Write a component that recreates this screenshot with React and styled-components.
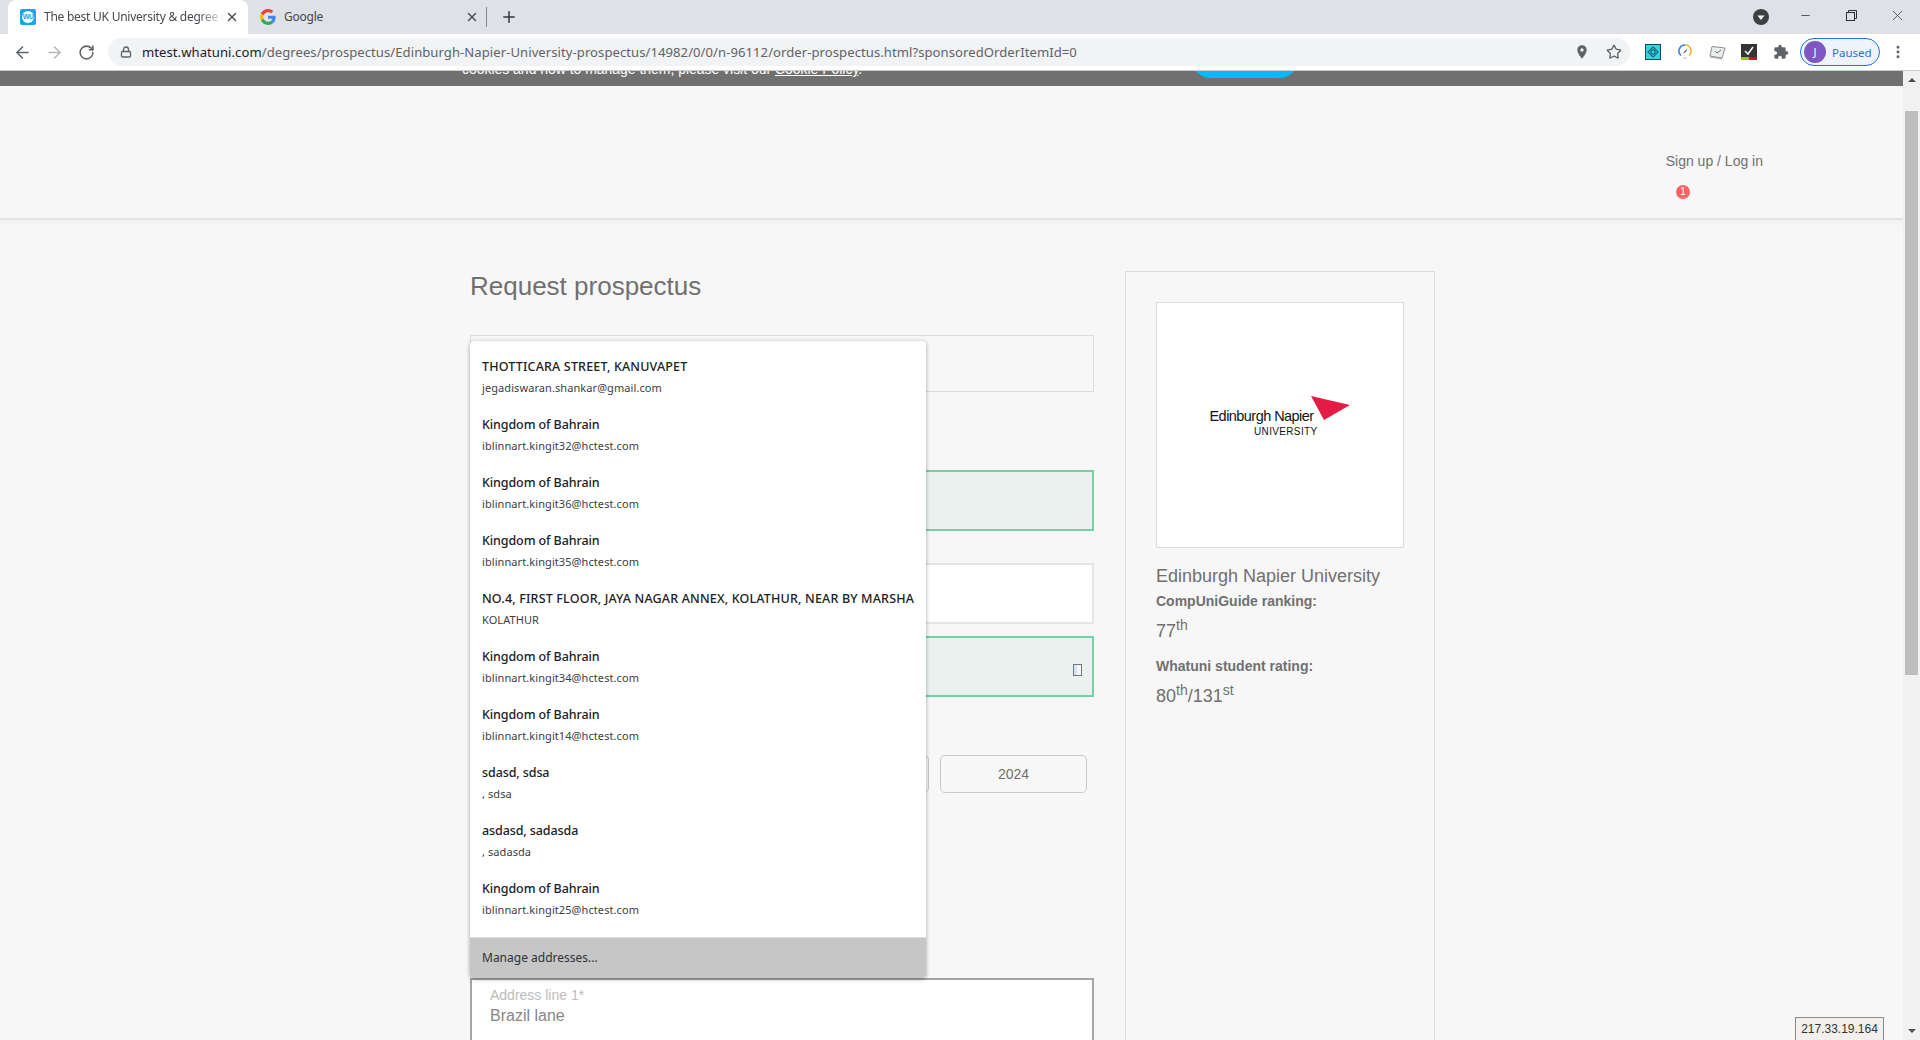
import React from "react";
import styled, { createGlobalStyle } from "styled-components";
import { ArrowLeft, ArrowRight, RotateCw, Lock, Star, Plus, X, Minus, MoreVertical } from "lucide-react";

const Global = createGlobalStyle`
  html, body {
    margin: 0;
    padding: 0;
    height: 1040px;
    overflow: hidden;
    background: #f7f7f7;
  }
  * { box-sizing: border-box; }
`;

const Shell = styled.div`
  position: relative;
  width: 1920px;
  height: 1040px;
  display: flex;
  flex-direction: column;
  overflow: hidden;
  font-family: "Liberation Sans", Arial, sans-serif;
`;

/* browser chrome */
const TabStrip = styled.div`
  height: 34px;
  flex: none;
  display: flex;
  align-items: stretch;
  padding-left: 8px;
  background: #dee1e6;
`;

const Tab = styled.div`
  width: 240px;
  display: flex;
  align-items: center;
  padding-left: 12px;
  padding-right: 9px;
  border-radius: 8px 8px 0 0;
  background: ${p => (p.$active ? "#ffffff" : "transparent")};
`;

const TabTitle = styled.span`
  flex: 1;
  margin-left: 8px;
  overflow: hidden;
  white-space: nowrap;
  font-family: "Noto Sans", sans-serif;
  font-size: 12px;
  line-height: 16px;
  margin-top: -1px;
  letter-spacing: -0.25px;
  color: #45484c;
  ${p => p.$fade && `
    -webkit-mask-image: linear-gradient(90deg, #000 85%, transparent 100%);
    mask-image: linear-gradient(90deg, #000 85%, transparent 100%);
  `}
`;

const TabClose = styled(X)`
  flex: none;
  color: #4a4c50;
`;

const TabDivider = styled.div`
  width: 1px;
  height: 20px;
  margin-left: -2px;
  align-self: center;
  background: #85888c;
`;

const NewTab = styled(Plus)`
  align-self: center;
  margin-left: 13px;
  color: #35373a;
`;

const WuIcon = styled.div`
  width: 16px;
  height: 16px;
  flex: none;
  border-radius: 2px;
  background: #12a8ea;
  display: flex;
  align-items: center;
  justify-content: center;
`;

const WuMark = styled.span`
  width: 12px;
  height: 12px;
  border-radius: 50%;
  background: #fff;
  color: #12a8ea;
  font-size: 7px;
  font-weight: bold;
  line-height: 12px;
  text-align: center;
  letter-spacing: -0.5px;
`;

const WindowControls = styled.div`
  margin-left: auto;
  display: flex;
  align-items: flex-start;
  color: #2c2d30;
`;

const TabSearch = styled.svg`
  width: 16px;
  height: 16px;
  margin-top: 9px;
  margin-right: 13px;
`;

const WinButton = styled.div`
  width: 46px;
  height: 30px;
  display: flex;
  align-items: center;
  justify-content: center;
`;

const Toolbar = styled.div`
  height: 36px;
  flex: none;
  display: flex;
  align-items: center;
  padding-left: 12px;
  background: #ffffff;
  color: #5f6368;
`;

const NavButton = styled.div`
  width: 20px;
  height: 20px;
  margin-right: 12px;
  display: flex;
  align-items: center;
  justify-content: center;
  color: ${p => (p.$disabled ? "#b5b7ba" : "#5f6368")};
`;

const AddressBar = styled.div`
  width: 1522px;
  height: 28px;
  display: flex;
  align-items: center;
  padding: 0 8px 0 12px;
  border-radius: 14px;
  background: #f1f3f4;
`;

const UrlText = styled.span`
  flex: 1;
  margin-left: 10px;
  font-family: "Noto Sans", sans-serif;
  font-size: 13.08px;
  letter-spacing: 0.06px;
  color: #5f6368;
  white-space: nowrap;
`;

const Host = styled.span`
  color: #202124;
`;

const BarIcons = styled.div`
  display: flex;
  align-items: center;
  gap: 16px;
`;

const Extensions = styled.div`
  display: flex;
  align-items: center;
  margin-left: 7px;
`;

const ExtSlot = styled.div`
  width: 32px;
  height: 28px;
  display: flex;
  align-items: center;
  justify-content: center;
`;

const ProfilePill = styled.div`
  width: 80px;
  height: 28px;
  margin-left: 3px;
  display: flex;
  align-items: center;
  padding-left: 3px;
  border: 1px solid #1a73e8;
  border-radius: 14px;
  background: #eef3fc;
  font-family: "Noto Sans", sans-serif;
  font-size: 11.5px;
  color: #2f6fdc;
`;

const Avatar = styled.span`
  width: 22px;
  height: 22px;
  margin-right: 6px;
  border-radius: 50%;
  background: #7e57c2;
  color: #fff;
  font-size: 11px;
  line-height: 22px;
  text-align: center;
`;

const MenuDots = styled(MoreVertical)`
  margin-left: 10px;
  color: #5f6368;
`;

/* page */
const Viewport = styled.div`
  flex: 1;
  display: flex;
  min-height: 0;
  border-top: 1px solid #c9cbce;
`;

const Page = styled.div`
  flex: 1;
  position: relative;
  overflow: hidden;
  background: #f7f7f7;
`;

const CookieBand = styled.div`
  height: 15px;
  overflow: hidden;
  display: flex;
  align-items: flex-end;
  padding-left: 462px;
  background: #707070;
  color: #fff;
  font-size: 14px;
  line-height: 16px;
`;

const CookieText = styled.span`
  display: block;
  margin-bottom: 9px;
  white-space: nowrap;
  letter-spacing: -0.03px;
  a { color: #fff; text-decoration: underline; }
`;

const CookieButton = styled.span`
  width: 108px;
  height: 40px;
  flex: none;
  margin-left: 329px;
  margin-bottom: 8px;
  border-radius: 20px;
  background: #00bbfd;
`;

const SiteHeader = styled.header`
  height: 134px;
  display: flex;
  flex-direction: column;
  align-items: flex-end;
  padding: 67px 140px 0 0;
  border-bottom: 2px solid #e2e2e2;
`;

const SignLink = styled.a`
  font-size: 14px;
  line-height: 16px;
  color: #707070;
`;

const Badge = styled.span`
  width: 14px;
  height: 14px;
  margin-top: 16px;
  margin-right: 73px;
  border-radius: 50%;
  background: #fb6464;
  color: #fff;
  font-size: 10px;
  line-height: 14px;
  text-align: center;
`;

const Main = styled.main`
  display: grid;
  grid-template-columns: 624px 310px;
  column-gap: 31px;
  padding: 38px 0 0 470px;
  background: linear-gradient(#f4f4f4, #f7f7f7 12px);
`;

const FormColumn = styled.div`
  position: relative;
  padding-top: 11px;
`;

const Title = styled.h1`
  margin: 0 0 32px;
  font-size: 26px;
  font-weight: normal;
  line-height: 34px;
  color: #707070;
`;

const Field = styled.div`
  height: ${p => p.$h || 61}px;
  margin-top: ${p => p.$gap || 0}px;
  position: relative;
  border: ${p => (p.$variant === "plain" ? "1px" : "2px")} solid
    ${p => ({ plain: "#dcdcdc", valid: "#73d1a4", white: "#e5e5e5", active: "#a5a5a5" }[p.$variant])};
  background: ${p => ({ plain: "transparent", valid: "#e9f2ef", white: "#ffffff", active: "#ffffff" }[p.$variant])};
`;

const Tofu = styled.span`
  position: absolute;
  right: 10px;
  bottom: 19px;
  width: 9px;
  height: 12px;
  border: 1px solid #777;
  background: linear-gradient(90deg, #cfe6fa 40%, #f5f7f7 40%);
`;

const YearRow = styled.div`
  display: flex;
  justify-content: flex-end;
  gap: 11px;
  margin-top: 58px;
  padding-right: 7px;
`;

const YearBox = styled.div`
  width: ${p => p.$w}px;
  height: 38px;
  border: 1px solid #c9c9c9;
  border-radius: 5px;
  font-size: 14px;
  line-height: 36px;
  text-align: center;
  color: #707070;
`;

const AddressField = styled(Field)`
  margin-top: 185px;
  padding: 7px 0 0 18px;
  height: 64px;
`;

const FloatLabel = styled.div`
  font-size: 14px;
  line-height: 16px;
  color: #bdbdbd;
`;

const FieldValue = styled.div`
  margin-top: 3px;
  font-size: 16px;
  line-height: 20px;
  color: #878787;
`;

/* autofill popup, sits over the form */
const Popup = styled.div`
  position: absolute;
  left: 0;
  top: 83px;
  width: 456px;
  border-radius: 4px;
  overflow: hidden;
  background: #ffffff;
  box-shadow: 0 1px 4px rgba(0, 0, 0, 0.35);
  font-family: "Noto Sans", sans-serif;
`;

const PopupList = styled.div`
  padding: 8px 0;
`;

const PopupRow = styled.div`
  height: 58px;
  padding: 9px 12px 0;
`;

const RowName = styled.div`
  font-size: 12.5px;
  font-weight: 500;
  line-height: 18px;
  white-space: nowrap;
  letter-spacing: ${p => (p.$caps ? "0.17px" : "-0.1px")};
  color: #202124;
`;

const RowSub = styled.div`
  margin-top: 4px;
  font-size: 11px;
  line-height: 16px;
  white-space: nowrap;
  letter-spacing: 0.08px;
  color: #3c4043;
`;

const ManageRow = styled.div`
  height: 41px;
  padding-left: 12px;
  border-top: 1px solid #dedede;
  background: #c6c6c6;
  font-size: 12px;
  line-height: 39px;
  color: #303134;
`;

/* sidebar */
const SideCard = styled.aside`
  height: 800px;
  margin-top: 13px;
  padding: 30px 30px 0;
  border: 1px solid #dcdcdc;
`;

const LogoFrame = styled.div`
  width: 248px;
  height: 246px;
  display: flex;
  align-items: center;
  justify-content: center;
  border: 1px solid #dcdcdc;
  background: #ffffff;
`;

const LogoLockup = styled.div`
  position: relative;
  width: 141px;
  padding-top: 11px;
  margin-bottom: 16px;
  color: #141414;
`;

const LogoName = styled.div`
  width: 108px;
  font-size: 14.5px;
  line-height: 18px;
  letter-spacing: -0.55px;
  white-space: nowrap;
`;

const LogoSub = styled.div`
  width: 108px;
  margin-top: 1px;
  font-size: 10px;
  line-height: 12px;
  text-align: right;
  letter-spacing: 0.35px;
`;

const LogoMark = styled.svg`
  position: absolute;
  top: 0;
  right: 0;
  width: 40px;
  height: 25px;
`;

const UniName = styled.div`
  margin-top: 17px;
  font-size: 18px;
  line-height: 22px;
  color: #707070;
`;

const StatLabel = styled.div`
  margin-top: ${p => p.$gap}px;
  font-size: 14px;
  font-weight: bold;
  line-height: 16px;
  color: #707070;
`;

const StatValue = styled.div`
  margin-top: 10px;
  font-size: 18px;
  line-height: 24px;
  color: #707070;
  sup {
    font-size: 14px;
    line-height: 0;
  }
`;

/* page scrollbar */
const ScrollTrack = styled.div`
  width: 17px;
  flex: none;
  display: flex;
  flex-direction: column;
  align-items: center;
  padding-top: 7px;
  background: #f1f1f1;
`;

const ScrollUp = styled.span`
  width: 0;
  height: 0;
  border-left: 4px solid transparent;
  border-right: 4px solid transparent;
  border-bottom: 4px solid #505050;
`;

const ScrollThumb = styled.div`
  width: 13px;
  height: 564px;
  margin-top: 29px;
  background: #bdbdbd;
`;

const ScrollDown = styled.span`
  width: 0;
  height: 0;
  margin-top: auto;
  margin-bottom: 7px;
  border-left: 4px solid transparent;
  border-right: 4px solid transparent;
  border-top: 4px solid #505050;
`;

const IpTag = styled.div`
  position: absolute;
  right: 36px;
  bottom: -1px;
  width: 89px;
  height: 24px;
  border: 1px solid #8a8a8a;
  background: #f2efec;
  font-size: 12px;
  line-height: 22px;
  text-align: center;
  color: #333;
`;

const addresses = [
  ["THOTTICARA STREET, KANUVAPET", "jegadiswaran.shankar@gmail.com"],
  ["Kingdom of Bahrain", "iblinnart.kingit32@hctest.com"],
  ["Kingdom of Bahrain", "iblinnart.kingit36@hctest.com"],
  ["Kingdom of Bahrain", "iblinnart.kingit35@hctest.com"],
  ["NO.4, FIRST FLOOR, JAYA NAGAR ANNEX, KOLATHUR, NEAR BY MARSHA", "KOLATHUR"],
  ["Kingdom of Bahrain", "iblinnart.kingit34@hctest.com"],
  ["Kingdom of Bahrain", "iblinnart.kingit14@hctest.com"],
  ["sdasd, sdsa", ", sdsa"],
  ["asdasd, sadasda", ", sadasda"],
  ["Kingdom of Bahrain", "iblinnart.kingit25@hctest.com"],
];

const GoogleG = () => (
  <svg width="16" height="16" viewBox="0 0 48 48" style={{ flex: "none" }}>
    <path fill="#EA4335" d="M24 9.5c3.5 0 6.7 1.2 9.2 3.6l6.9-6.9C35.9 2.4 30.5 0 24 0 14.6 0 6.5 5.4 2.6 13.2l8 6.2C12.5 13.7 17.8 9.5 24 9.5z" />
    <path fill="#4285F4" d="M47 24.5c0-1.6-.1-3.1-.4-4.5H24v9h12.9c-.6 3-2.2 5.5-4.7 7.2l7.7 6c4.5-4.2 7.1-10.3 7.1-17.7z" />
    <path fill="#FBBC05" d="M10.6 28.6c-.5-1.4-.8-3-.8-4.6s.3-3.2.8-4.6l-8-6.2C.9 16.5 0 20.1 0 24s.9 7.5 2.6 10.8l8-6.2z" />
    <path fill="#34A853" d="M24 48c6.5 0 11.9-2.1 15.9-5.8l-7.7-6c-2.2 1.4-4.9 2.3-8.2 2.3-6.2 0-11.5-4.2-13.4-9.9l-8 6.2C6.5 42.6 14.6 48 24 48z" />
  </svg>
);

const PinIcon = () => (
  <svg width="16" height="16" viewBox="0 0 24 24" fill="#5f6368">
    <path d="M12 2C8.13 2 5 5.13 5 9c0 5.25 7 13 7 13s7-7.75 7-13c0-3.87-3.13-7-7-7zm0 9.5a2.5 2.5 0 0 1 0-5 2.5 2.5 0 0 1 0 5z" />
  </svg>
);

const PuzzleIcon = () => (
  <svg width="16" height="16" viewBox="0 0 24 24" fill="#5f6368">
    <path d="M20.5 11H19V7a2 2 0 0 0-2-2h-4V3.5a2.5 2.5 0 0 0-5 0V5H4a2 2 0 0 0-2 2v3.8h1.5a2.7 2.7 0 0 1 0 5.4H2V20a2 2 0 0 0 2 2h3.8v-1.5a2.7 2.7 0 0 1 5.4 0V22H17a2 2 0 0 0 2-2v-4h1.5a2.5 2.5 0 0 0 0-5z" />
  </svg>
);

const TealExt = () => (
  <svg width="16" height="16" viewBox="0 0 16 16">
    <rect x="0.5" y="0.5" width="15" height="15" fill="#35d3dc" stroke="#0d4a5c" />
    <path d="M8 3 13 8 8 13 3 8z" fill="none" stroke="#0f6a80" strokeWidth="1.2" />
    <circle cx="8" cy="8" r="2.2" fill="none" stroke="#0f6a80" strokeWidth="1.2" />
  </svg>
);

const CompassExt = () => (
  <svg width="16" height="18" viewBox="0 0 16 18">
    <path d="M8 2a6 6 0 0 0-4 10.5" fill="none" stroke="#3b82e0" strokeWidth="1.6" />
    <path d="M8 2a6 6 0 0 1 4 10.5" fill="none" stroke="#f2b431" strokeWidth="1.6" />
    <path d="M5.5 10.5 10.5 5.5 9 9z" fill="#555" />
    <path d="M6 14h4l-1 2H7z" fill="#d6d8da" />
  </svg>
);

const NoteExt = () => (
  <svg width="18" height="16" viewBox="0 0 18 16">
    <path d="M4 2.5 17 4l-3 10-12-2z" fill="#eceded" stroke="#8d8f91" />
    <path d="M2 12l12 2v1.5L2 13.5z" fill="#a8aaac" />
    <path d="M7 7l2 2 4-3" fill="none" stroke="#6b6d6f" />
  </svg>
);

const CheckExt = () => (
  <svg width="16" height="16" viewBox="0 0 16 16">
    <rect width="16" height="13" fill="#333" />
    <rect y="13" width="8" height="3" fill="#9cc31b" />
    <rect x="8" y="13" width="8" height="3" fill="#c4161c" />
    <path d="M4 7l3 3 5-7" fill="none" stroke="#f2f2f2" strokeWidth="1.6" />
  </svg>
);

const RestoreIcon = () => (
  <svg width="11" height="11" viewBox="0 0 11 11" fill="none" stroke="#2c2d30">
    <rect x="0.5" y="2.5" width="8" height="8" />
    <path d="M2.5 2.5v-2h8v8h-2" />
  </svg>
);

export default function App() {
  return (
    <Shell>
      <Global />
      <TabStrip>
        <Tab $active>
          <WuIcon><WuMark>WU</WuMark></WuIcon>
          <TabTitle $fade>The best UK University &amp; degree courses</TabTitle>
          <TabClose size={14} strokeWidth={2.4} />
        </Tab>
        <Tab>
          <GoogleG />
          <TabTitle>Google</TabTitle>
          <TabClose size={14} strokeWidth={2.4} />
        </Tab>
        <TabDivider />
        <NewTab size={18} strokeWidth={2} />
        <WindowControls>
          <TabSearch viewBox="0 0 16 16">
            <circle cx="8" cy="8" r="8" fill="#3c4043" />
            <path d="M4.5 6.5h7L8 11z" fill="#fff" />
          </TabSearch>
          <WinButton><Minus size={13} strokeWidth={1.4} /></WinButton>
          <WinButton><RestoreIcon /></WinButton>
          <WinButton><X size={17} strokeWidth={1} /></WinButton>
        </WindowControls>
      </TabStrip>

      <Toolbar>
        <NavButton><ArrowLeft size={19} strokeWidth={2} /></NavButton>
        <NavButton $disabled><ArrowRight size={19} strokeWidth={2} /></NavButton>
        <NavButton><RotateCw size={17} strokeWidth={2.2} /></NavButton>
        <AddressBar>
          <Lock size={12} strokeWidth={2.6} />
          <UrlText>
            <Host>mtest.whatuni.com</Host>/degrees/prospectus/Edinburgh-Napier-University-prospectus/14982/0/0/n-96112/order-prospectus.html?sponsoredOrderItemId=0
          </UrlText>
          <BarIcons>
            <PinIcon />
            <Star size={16} strokeWidth={2} />
          </BarIcons>
        </AddressBar>
        <Extensions>
          <ExtSlot><TealExt /></ExtSlot>
          <ExtSlot><CompassExt /></ExtSlot>
          <ExtSlot><NoteExt /></ExtSlot>
          <ExtSlot><CheckExt /></ExtSlot>
          <ExtSlot><PuzzleIcon /></ExtSlot>
        </Extensions>
        <ProfilePill><Avatar>J</Avatar>Paused</ProfilePill>
        <MenuDots size={16} strokeWidth={2.4} />
      </Toolbar>

      <Viewport>
        <Page>
          <CookieBand>
            <CookieText>cookies and how to manage them, please visit our <a>Cookie Policy</a>.</CookieText>
            <CookieButton />
          </CookieBand>
          <SiteHeader>
            <SignLink>Sign up / Log in</SignLink>
            <Badge>1</Badge>
          </SiteHeader>
          <Main>
            <FormColumn>
              <Title>Request prospectus</Title>
              <Field $variant="plain" $h={57} />
              <Field $variant="valid" $gap={78} />
              <Field $variant="white" $gap={32} />
              <Field $variant="valid" $gap={12}><Tofu /></Field>
              <YearRow>
                <YearBox $w={147} />
                <YearBox $w={147}>2024</YearBox>
              </YearRow>
              <AddressField $variant="active">
                <FloatLabel>Address line 1*</FloatLabel>
                <FieldValue>Brazil lane</FieldValue>
              </AddressField>
              <Popup>
                <PopupList>
                  {addresses.map(([name, sub], i) => (
                    <PopupRow key={i}>
                      <RowName $caps={name === name.toUpperCase()}>{name}</RowName>
                      <RowSub>{sub}</RowSub>
                    </PopupRow>
                  ))}
                </PopupList>
                <ManageRow>Manage addresses...</ManageRow>
              </Popup>
            </FormColumn>
            <SideCard>
              <LogoFrame>
                <LogoLockup>
                  <LogoName>Edinburgh Napier</LogoName>
                  <LogoSub>UNIVERSITY</LogoSub>
                  <LogoMark viewBox="0 0 40 25">
                    <path d="M0 0 39 9 13 24z" fill="#e31b45" />
                  </LogoMark>
                </LogoLockup>
              </LogoFrame>
              <UniName>Edinburgh Napier University</UniName>
              <StatLabel $gap={6}>CompUniGuide ranking:</StatLabel>
              <StatValue>77<sup>th</sup></StatValue>
              <StatLabel $gap={15}>Whatuni student rating:</StatLabel>
              <StatValue>80<sup>th</sup>/131<sup>st</sup></StatValue>
            </SideCard>
          </Main>
        </Page>
        <ScrollTrack>
          <ScrollUp />
          <ScrollThumb />
          <ScrollDown />
        </ScrollTrack>
      </Viewport>
      <IpTag>217.33.19.164</IpTag>
    </Shell>
  );
}
